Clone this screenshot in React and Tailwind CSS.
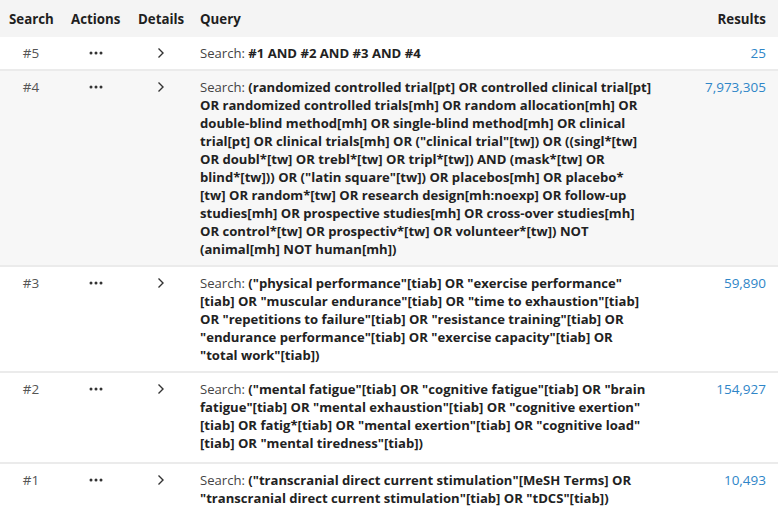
import React from "react";

const rows = [
  { id: "#5", lines: ["#1 AND #2 AND #3 AND #4"], results: "25", gray: false },
  {
    id: "#4",
    lines: [
      "(randomized controlled trial[pt] OR controlled clinical trial[pt]",
      "OR randomized controlled trials[mh] OR random allocation[mh] OR",
      "double-blind method[mh] OR single-blind method[mh] OR clinical",
      'trial[pt] OR clinical trials[mh] OR ("clinical trial"[tw]) OR ((singl*[tw]',
      "OR doubl*[tw] OR trebl*[tw] OR tripl*[tw]) AND (mask*[tw] OR",
      'blind*[tw])) OR ("latin square"[tw]) OR placebos[mh] OR placebo*',
      "[tw] OR random*[tw] OR research design[mh:noexp] OR follow-up",
      "studies[mh] OR prospective studies[mh] OR cross-over studies[mh]",
      "OR control*[tw] OR prospectiv*[tw] OR volunteer*[tw]) NOT",
      "(animal[mh] NOT human[mh])",
    ],
    results: "7,973,305",
    gray: true,
  },
  {
    id: "#3",
    lines: [
      '("physical performance"[tiab] OR "exercise performance"',
      '[tiab] OR "muscular endurance"[tiab] OR "time to exhaustion"[tiab]',
      'OR "repetitions to failure"[tiab] OR "resistance training"[tiab] OR',
      '"endurance performance"[tiab] OR "exercise capacity"[tiab] OR',
      '"total work"[tiab])',
    ],
    results: "59,890",
    gray: false,
  },
  {
    id: "#2",
    lines: [
      '("mental fatigue"[tiab] OR "cognitive fatigue"[tiab] OR "brain',
      'fatigue"[tiab] OR "mental exhaustion"[tiab] OR "cognitive exertion"',
      '[tiab] OR fatig*[tiab] OR "mental exertion"[tiab] OR "cognitive load"',
      '[tiab] OR "mental tiredness"[tiab])',
    ],
    results: "154,927",
    gray: false,
    tall: true,
  },
  {
    id: "#1",
    lines: [
      '("transcranial direct current stimulation"[MeSH Terms] OR',
      '"transcranial direct current stimulation"[tiab] OR "tDCS"[tiab])',
    ],
    results: "10,493",
    gray: false,
  },
];

function Dots() {
  return (
    <svg width="14" height="4" viewBox="0 0 14 4" className="block">
      <circle cx="2" cy="2" r="1.5" fill="#333" />
      <circle cx="7" cy="2" r="1.5" fill="#333" />
      <circle cx="12" cy="2" r="1.5" fill="#333" />
    </svg>
  );
}

function Chevron() {
  return (
    <svg width="8" height="12" viewBox="0 0 8 12" className="block">
      <path d="M1.5 1.5 L6 6 L1.5 10.5" fill="none" stroke="#333" strokeWidth="1.4" />
    </svg>
  );
}

export default function App() {
  return (
    <div
      className="w-[778px] h-[506px] bg-white overflow-hidden text-[13.1px] leading-[18px] text-[#212121]"
      style={{ fontFamily: '"Open Sans", "Noto Sans", sans-serif' }}
    >
      <div className="flex h-[37px] items-center bg-[#f4f4f4] font-bold text-[13.3px] text-[#1f1f1f]">
        <div className="w-[62px] pl-[9px]">Search</div>
        <div className="w-[67px] pl-[9px]">Actions</div>
        <div className="w-[62px] pl-[9px]">Details</div>
        <div className="flex-1 pl-[9px]">Query</div>
        <div className="pr-[12px]">Results</div>
      </div>
      {rows.map((r, i) => (
        <div
          key={r.id}
          className={
            "flex pt-[7px] " +
            (r.tall ? "pb-[10px] " : "pb-[7px] ") +
            (i > 0 ? "border-t-2 border-[#ebebeb] " : "") +
            (r.gray ? "bg-[#f7f7f7]" : "bg-white")
          }
        >
          <div className="w-[62px] pl-[9px] text-[#555] text-[13.5px]">
            <div className="w-[44px] text-center">{r.id}</div>
          </div>
          <div className="w-[67px] pl-[9px] flex h-[18px] items-center">
            <div className="w-[49px] flex justify-center">
              <Dots />
            </div>
          </div>
          <div className="w-[62px] pl-[9px] flex h-[18px] items-center">
            <div className="w-[45px] flex justify-center">
              <Chevron />
            </div>
          </div>
          <div className="flex-1 pl-[9px] whitespace-nowrap">
            {r.lines.map((l, j) => (
              <div key={j}>
                {j === 0 && <span className="font-normal text-[#444]">Search: </span>}
                <span className="font-bold text-[#222]">{l}</span>
              </div>
            ))}
          </div>
          <div className="pr-[12px] text-[#2f86c8] text-right text-[13.5px]">{r.results}</div>
        </div>
      ))}
    </div>
  );
}
